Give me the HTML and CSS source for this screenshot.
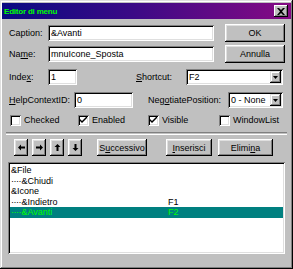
FILE: index.html
```html
<!DOCTYPE html>
<html lang="it">
  <head>
    <title>Editor di menu</title>
    <link rel="stylesheet" href="styles.css">
  </head>
  <body>
    <div class="dialog">
      <div class="titlebar">
        <span class="title">Editor di menu</span>
        <span class="close">
          <svg width="8" height="7" viewBox="0 0 8 7"><path d="M0 0h2l2 2 2-2h2L5 3.5 8 7H6L4 5 2 7H0l3-3.5z" fill="#000"/></svg>
        </span>
      </div>

      <div class="row row-caption">
        <label class="lbl lbl-main">Caption:</label>
        <div class="field field-long">&amp;Avanti</div>
        <button class="btn btn-side">OK</button>
      </div>

      <div class="row row-name">
        <label class="lbl lbl-main">Na<u>m</u>e:</label>
        <div class="field field-long">mnuIcone_Sposta</div>
        <button class="btn btn-side">Annulla</button>
      </div>

      <div class="row row-index">
        <label class="lbl lbl-main">Inde<u>x</u>:</label>
        <div class="field field-index">1</div>
        <label class="lbl lbl-shortcut"><u>S</u>hortcut:</label>
        <div class="field combo combo-shortcut">
          <span class="combo-text">F2</span>
          <span class="drop"><svg width="5" height="3" viewBox="0 0 5 3"><path d="M0 0h5L2.5 3z" fill="#000"/></svg></span>
        </div>
      </div>

      <div class="row row-help">
        <label class="lbl lbl-help"><u>H</u>elpContextID:</label>
        <div class="field field-help">0</div>
        <label class="lbl lbl-negotiate">Neg<u>o</u>tiatePosition:</label>
        <div class="field combo combo-negotiate">
          <span class="combo-text">0 - None</span>
          <span class="drop"><svg width="5" height="3" viewBox="0 0 5 3"><path d="M0 0h5L2.5 3z" fill="#000"/></svg></span>
        </div>
      </div>

      <div class="row row-checks">
        <div class="check"><span class="box"></span>Checked</div>
        <div class="check"><span class="box"><svg width="7" height="7" viewBox="0 0 7 7"><path d="M0 2l2 2 5-5v2L2 6 0 4z" fill="#000"/></svg></span>Enabled</div>
        <div class="check"><span class="box"><svg width="7" height="7" viewBox="0 0 7 7"><path d="M0 2l2 2 5-5v2L2 6 0 4z" fill="#000"/></svg></span>Visible</div>
        <div class="check"><span class="box"></span>WindowList</div>
      </div>

      <div class="separator"></div>

      <div class="row row-tools">
        <button class="btn btn-arrow"><svg width="7" height="7" viewBox="0 0 7 7"><path d="M0 3.5L3 0.5v2h4v2H3v2z" fill="#000"/></svg></button>
        <button class="btn btn-arrow"><svg width="7" height="7" viewBox="0 0 7 7"><path d="M7 3.5L4 0.5v2H0v2h4v2z" fill="#000"/></svg></button>
        <button class="btn btn-arrow"><svg width="7" height="7" viewBox="0 0 7 7"><path d="M3.5 0L6.5 3h-2v4h-2V3h-2z" fill="#000"/></svg></button>
        <button class="btn btn-arrow"><svg width="7" height="7" viewBox="0 0 7 7"><path d="M3.5 7L6.5 4h-2V0h-2v4h-2z" fill="#000"/></svg></button>
        <button class="btn btn-next">S<u>u</u>ccessivo</button>
        <button class="btn btn-insert"><u>I</u>nserisci</button>
        <button class="btn btn-delete">Elimi<u>n</u>a</button>
      </div>

      <div class="menu-list">
        <div class="item"><span class="item-name">&amp;File</span></div>
        <div class="item"><span class="item-name"><span class="dots">····</span>&amp;Chiudi</span></div>
        <div class="item"><span class="item-name">&amp;Icone</span></div>
        <div class="item"><span class="item-name"><span class="dots">····</span>&amp;Indietro</span><span class="item-key">F1</span></div>
        <div class="item selected"><span class="item-name"><span class="dots">····</span>&amp;Avanti</span><span class="item-key">F2</span></div>
      </div>
    </div>
  </body>
</html>
```

FILE: styles.css
```css
body {
  margin: 0;
  font-family: "Liberation Sans", Arial, sans-serif;
  font-size: 9px;
  color: #000;
  background-color: #c0c0c0;
}

.dialog {
  width: 293px;
  height: 269px;
  box-sizing: border-box;
  padding: 3px 2px 0 2px;
  background-color: #c0c0c0;
  box-shadow: inset -1px -1px #000, inset 1px 1px #dfdfdf, inset -2px -2px #808080, inset 2px 2px #fff;
}

.titlebar {
  height: 16px;
  display: flex;
  align-items: center;
  justify-content: space-between;
  padding: 0 3px 0 2px;
  background: linear-gradient(to right, #0a0a82, #3a0a86 45%, #860a84);
}

.title {
  color: #00ff00;
  font-weight: bold;
  font-size: 8px;
  letter-spacing: -0.2px;
}

.close {
  width: 14px;
  height: 12px;
  display: flex;
  align-items: center;
  justify-content: center;
  background-color: #c0c0c0;
  box-shadow: inset -1px -1px #000, inset 1px 1px #fff, inset -2px -2px #808080;
}

.row {
  display: flex;
  align-items: center;
  padding-left: 7px;
}

.row-caption {
  margin-top: 5px;
  height: 18px;
}

.row-name {
  margin-top: 3px;
  height: 18px;
}

.row-index {
  margin-top: 6px;
  height: 16px;
}

.row-help {
  margin-top: 7px;
  height: 16px;
}

.row-checks {
  margin-top: 6px;
  height: 12px;
  padding-left: 8px;
}

.lbl {
  flex: none;
  white-space: nowrap;
}

.lbl-main {
  width: 39px;
}

.lbl-help {
  width: 65px;
}

.lbl-shortcut {
  margin-left: 59px;
  width: 50px;
}

.lbl-negotiate {
  margin-left: 15px;
  width: 80px;
}

.field {
  flex: none;
  box-sizing: border-box;
  height: 16px;
  padding: 3px 0 0 3px;
  background-color: #fff;
  box-shadow: inset 1px 1px #808080, inset -1px -1px #fff, inset 2px 2px #000, inset -2px -2px #dfdfdf;
  white-space: nowrap;
}

.field-long {
  width: 166px;
}

.field-index {
  width: 29px;
}

.field-help {
  width: 59px;
}

.combo {
  display: flex;
  justify-content: space-between;
  padding: 2px 2px 2px 3px;
}

.combo-text {
  padding-top: 1px;
}

.combo-shortcut {
  width: 97px;
}

.combo-negotiate {
  width: 55px;
}

.drop {
  width: 11px;
  height: 12px;
  display: flex;
  align-items: center;
  justify-content: center;
  background-color: #c0c0c0;
  box-shadow: inset -1px -1px #000, inset 1px 1px #dfdfdf, inset -2px -2px #808080, inset 2px 2px #fff;
}

.btn {
  flex: none;
  font-family: "Liberation Sans", Arial, sans-serif;
  font-size: 9px;
  color: #000;
  padding: 0;
  border: none;
  background-color: #c0c0c0;
  box-shadow: inset -1px -1px #000, inset 1px 1px #fff, inset -2px -2px #808080, inset 2px 2px #dfdfdf;
  display: flex;
  align-items: center;
  justify-content: center;
}

.btn-side {
  margin-left: 11px;
  width: 60px;
  height: 18px;
}

.check {
  display: flex;
  align-items: center;
  white-space: nowrap;
}

.check:nth-child(1) {
  width: 68px;
}

.check:nth-child(2) {
  width: 70px;
}

.check:nth-child(3) {
  width: 71px;
}

.box {
  width: 11px;
  height: 11px;
  box-sizing: border-box;
  margin-right: 3px;
  display: flex;
  align-items: center;
  justify-content: center;
  background-color: #fff;
  box-shadow: inset 1px 1px #808080, inset -1px -1px #fff, inset 2px 2px #000, inset -2px -2px #dfdfdf;
}

.separator {
  margin: 6px 4px 0 4px;
  height: 1px;
  border-top: 1px solid #808080;
  border-bottom: 1px solid #fff;
}

.row-tools {
  margin-top: 4px;
  height: 17px;
  padding-left: 12px;
}

.btn-arrow {
  width: 14px;
  height: 17px;
  margin-right: 4px;
}

.btn-next {
  margin-left: 11px;
  width: 50px;
  height: 17px;
}

.btn-insert {
  margin-left: 19px;
  width: 46px;
  height: 17px;
}

.btn-delete {
  margin-left: 6px;
  width: 55px;
  height: 17px;
}

.menu-list {
  margin: 6px 0 0 6px;
  width: 277px;
  height: 92px;
  box-sizing: border-box;
  padding: 3px 2px 0 2px;
  background-color: #fff;
  box-shadow: inset 1px 1px #808080, inset -1px -1px #fff, inset 2px 2px #000, inset -2px -2px #dfdfdf;
}

.item {
  display: flex;
  height: 10.5px;
  line-height: 10.5px;
  padding-left: 1px;
  white-space: nowrap;
}

.item-name {
  width: 157px;
}

.dots {
  letter-spacing: -0.5px;
  margin-right: 0.5px;
}

.item.selected {
  background-color: #008080;
  color: #00ff00;
}
```
